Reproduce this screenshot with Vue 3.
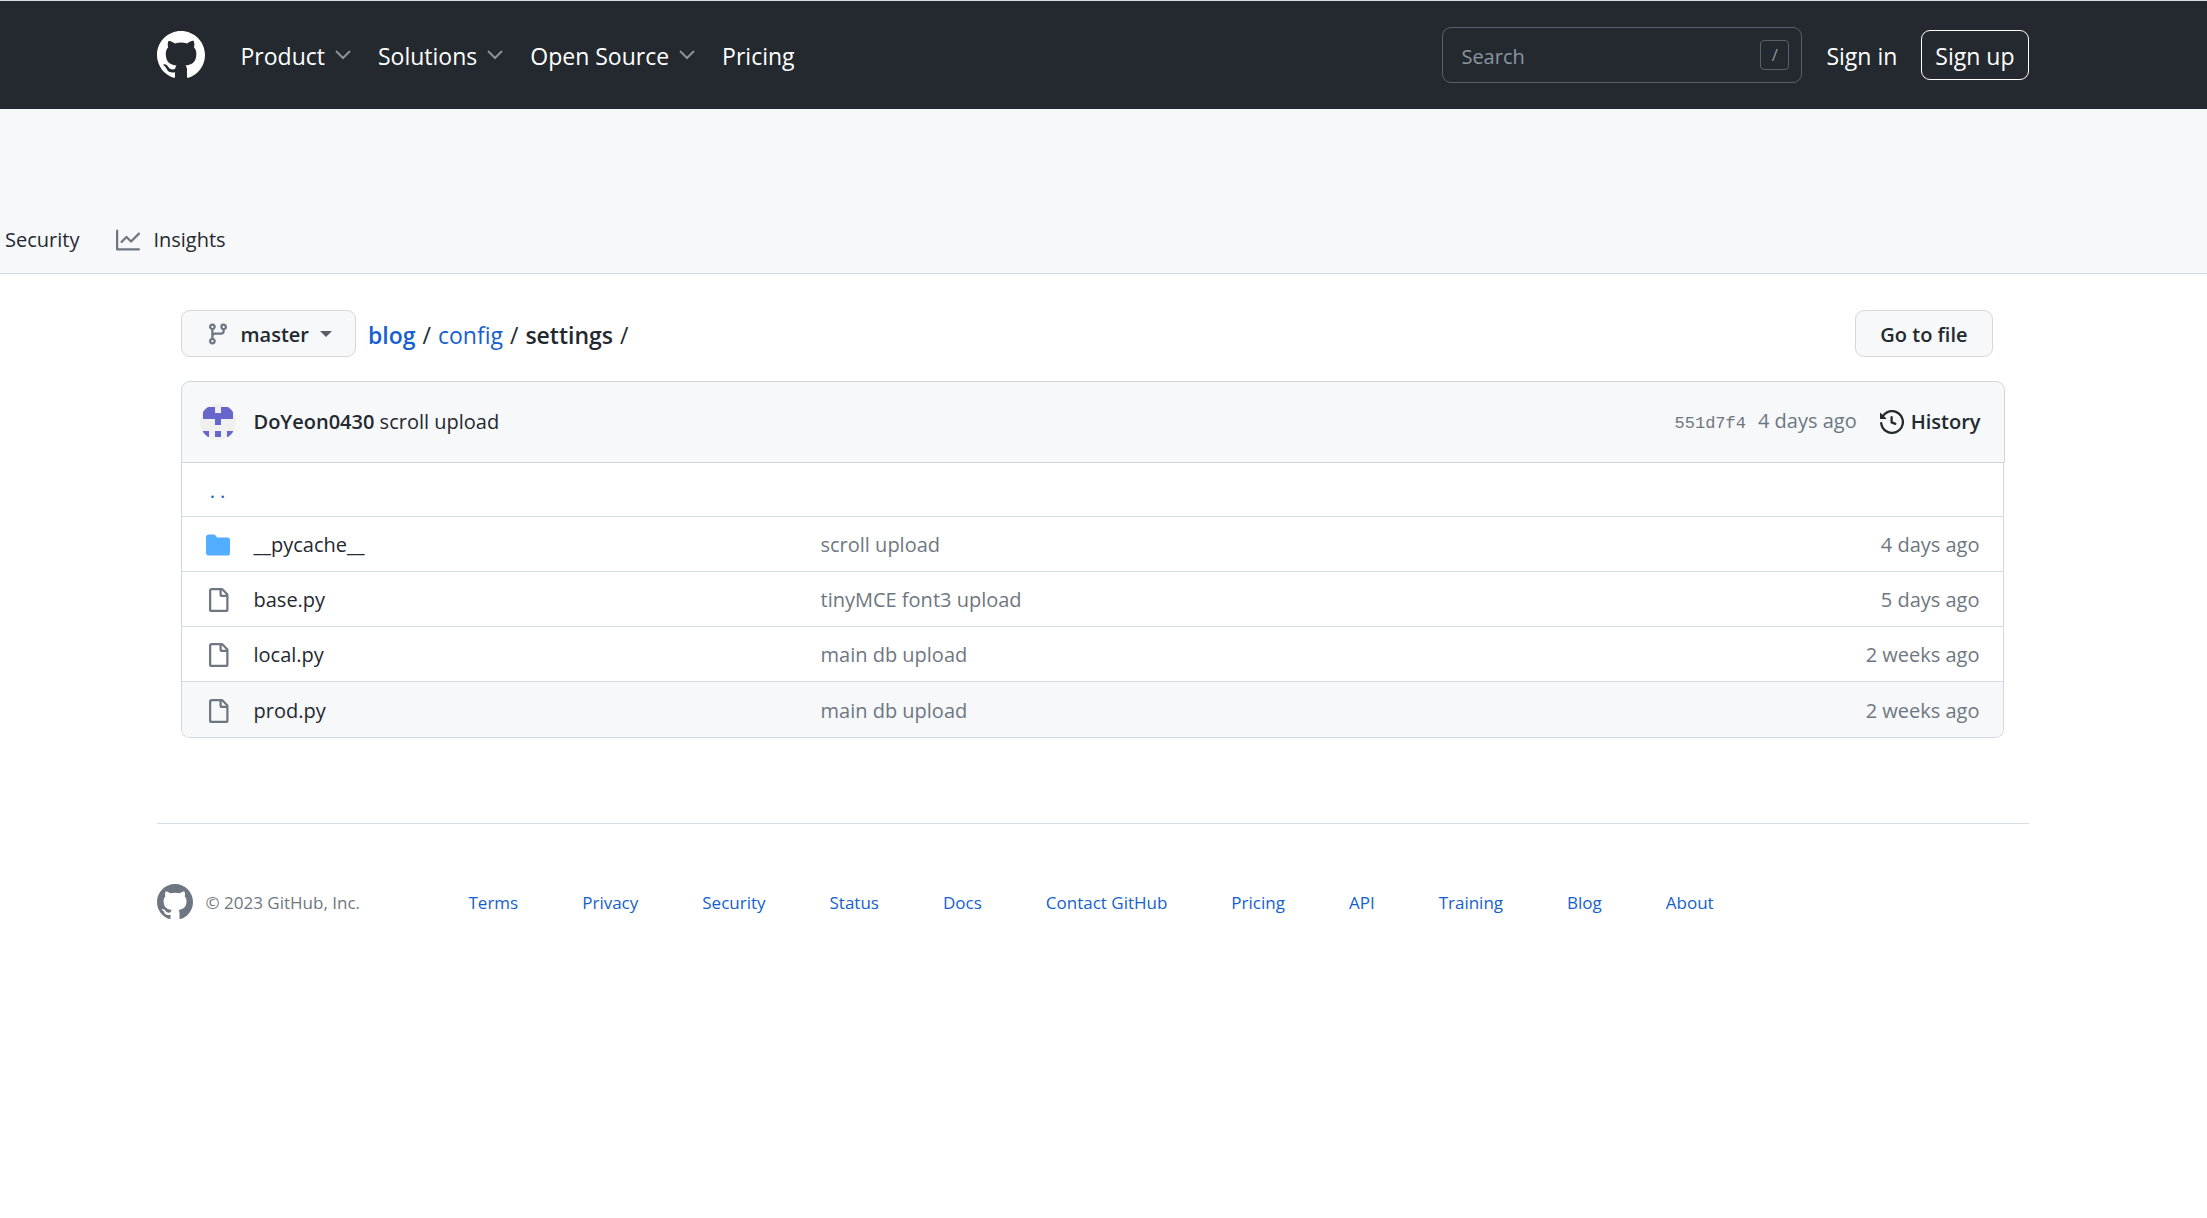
<script setup>
const menus = [
  { label: 'Product', open: true },
  { label: 'Solutions', open: true },
  { label: 'Open Source', open: true },
  { label: 'Pricing', open: false },
]
const files = [
  { name: '__pycache__', dir: true, message: 'scroll upload', age: '4 days ago' },
  { name: 'base.py', message: 'tinyMCE font3 upload', age: '5 days ago' },
  { name: 'local.py', message: 'main db upload', age: '2 weeks ago' },
  { name: 'prod.py', message: 'main db upload', age: '2 weeks ago', active: true },
]
const footerLinks = ['Terms', 'Privacy', 'Security', 'Status', 'Docs', 'Contact GitHub', 'Pricing', 'API', 'Training', 'Blog', 'About']
const mark = 'M8 0C3.58 0 0 3.58 0 8c0 3.54 2.29 6.53 5.47 7.59.4.07.55-.17.55-.38 0-.19-.01-.82-.01-1.49-2.01.37-2.53-.49-2.69-.94-.09-.23-.48-.94-.82-1.13-.28-.15-.68-.52-.01-.53.63-.01 1.08.58 1.23.82.72 1.21 1.87.87 2.33.66.07-.52.28-.87.51-1.07-1.78-.2-3.64-.89-3.64-3.95 0-.87.31-1.59.82-2.15-.08-.2-.36-1.02.08-2.12 0 0 .67-.21 2.2.82.64-.18 1.32-.27 2-.27.68 0 1.36.09 2 .27 1.53-1.04 2.2-.82 2.2-.82.44 1.1.16 1.92.08 2.12.51.56.82 1.27.82 2.15 0 3.07-1.87 3.75-3.65 3.95.29.25.54.73.54 1.48 0 1.07-.01 1.93-.01 2.2 0 .21.15.46.55.38A8.013 8.013 0 0 0 16 8c0-4.42-3.58-8-8-8z'
</script>

<template>
  <div class="page">
    <header class="site-header">
      <div class="container header-row">
        <a href="#" class="logo" aria-label="Homepage">
          <svg width="48" height="48" viewBox="0 0 16 16"><path :d="mark" /></svg>
        </a>
        <nav class="menu" aria-label="Global">
          <template v-for="m in menus" :key="m.label">
            <button v-if="m.open" type="button" class="menu-item">
              <span class="label">{{ m.label }}</span>
              <svg class="chevron" width="16" height="10" viewBox="0 0 16 10"><path d="M1 1l7 7 7-7" /></svg>
            </button>
            <a v-else href="#" class="menu-item"><span class="label">{{ m.label }}</span></a>
          </template>
        </nav>
        <label class="search">
          <input type="text" placeholder="Search" aria-label="Search" />
          <kbd>/</kbd>
        </label>
        <a href="#" class="sign-in label">Sign in</a>
        <a href="#" class="sign-up"><span class="label">Sign up</span></a>
      </div>
    </header>

    <nav class="repo-nav" aria-label="Repository">
      <a href="#" class="tab">Security</a>
      <a href="#" class="tab">
        <svg width="24" height="24" viewBox="0 0 16 16"><path d="M1.5 1.75V13.5h13.75a.75.75 0 0 1 0 1.5H.75a.75.75 0 0 1-.75-.75V1.75a.75.75 0 0 1 1.5 0Zm14.28 2.53-5.25 5.25a.75.75 0 0 1-1.06 0L7 7.06 4.28 9.78a.751.751 0 0 1-1.042-.018.751.751 0 0 1-.018-1.042l3.25-3.25a.75.75 0 0 1 1.06 0L10 7.94l4.72-4.72a.751.751 0 0 1 1.042.018.751.751 0 0 1 .018 1.042Z" /></svg>
        Insights
      </a>
    </nav>

    <div class="container">
      <main class="content">
        <div class="toolbar">
          <button type="button" class="btn branch">
            <svg width="24" height="24" viewBox="0 0 16 16"><path d="M9.5 3.25a2.25 2.25 0 1 1 3 2.122V6A2.5 2.5 0 0 1 10 8.5H6a1 1 0 0 0-1 1v1.128a2.251 2.251 0 1 1-1.5 0V5.372a2.25 2.25 0 1 1 1.5 0v1.836A2.493 2.493 0 0 1 6 7h4a1 1 0 0 0 1-1v-.628A2.25 2.25 0 0 1 9.5 3.25Zm-6 0a.75.75 0 1 0 1.5 0 .75.75 0 0 0-1.5 0Zm8.25-.75a.75.75 0 1 0 0 1.5.75.75 0 0 0 0-1.5ZM4.25 12a.75.75 0 1 0 0 1.5.75.75 0 0 0 0-1.5Z" /></svg>
            <span class="label">master</span>
            <span class="caret"></span>
          </button>
          <div class="crumbs label">
            <a href="#" class="root">blog</a><span>/</span><a href="#">config</a><span>/</span><strong>settings</strong><span>/</span>
          </div>
          <button type="button" class="btn goto"><span class="label">Go to file</span></button>
        </div>

        <section class="listing">
          <div class="commit">
            <svg class="avatar" width="36" height="36" viewBox="0 0 36 36">
              <defs><clipPath id="round"><circle cx="18" cy="18" r="18" /></clipPath></defs>
              <g clip-path="url(#round)">
                <rect width="36" height="36" fill="#f0f0f0" />
                <path fill="#6666cc" shape-rendering="crispEdges" d="M3 3h12v6h6v-6h12v12h-12v6h-6v-6h-12zM3 27h6v6h-6zM15 27h6v6h-6zM27 27h6v6h-6z" />
              </g>
            </svg>
            <p class="summary"><a href="#" class="author">DoYeon0430</a> <a href="#">scroll upload</a></p>
            <div class="meta">
              <a href="#" class="hash">551d7f4</a>
              <span>4 days ago</span>
            </div>
            <a href="#" class="history">
              <svg width="24" height="24" viewBox="0 0 16 16"><path d="m.427 1.927 1.215 1.215a8.002 8.002 0 1 1-1.6 5.685.75.75 0 1 1 1.493-.154 6.5 6.5 0 1 0 1.18-4.458l1.358 1.358A.25.25 0 0 1 3.896 6H.25A.25.25 0 0 1 0 5.75V2.104a.25.25 0 0 1 .427-.177ZM7.75 4a.75.75 0 0 1 .75.75v2.992l2.028.812a.75.75 0 0 1-.557 1.392l-2.5-1A.751.751 0 0 1 7 8.25v-3.5A.75.75 0 0 1 7.75 4Z" /></svg>
              History
            </a>
          </div>
          <div class="files">
            <table>
              <tbody>
                <tr class="up">
                  <td class="icon"><a href="#" aria-label="Parent directory">. .</a></td>
                  <td class="name"></td>
                  <td></td>
                  <td class="age"></td>
                </tr>
                <tr v-for="f in files" :key="f.name" :class="{ active: f.active }">
                  <td class="icon">
                    <svg v-if="f.dir" class="folder" width="24" height="24" viewBox="0 0 16 16"><path d="M1.75 1A1.75 1.75 0 0 0 0 2.75v10.5C0 14.216.784 15 1.75 15h12.5A1.75 1.75 0 0 0 16 13.25v-8.5A1.75 1.75 0 0 0 14.25 3H7.5a.25.25 0 0 1-.2-.1l-.9-1.2C6.07 1.26 5.55 1 5 1H1.75Z" /></svg>
                    <svg v-else width="24" height="24" viewBox="0 0 16 16"><path d="M2 1.75C2 .784 2.784 0 3.75 0h6.586c.464 0 .909.184 1.237.513l2.914 2.914c.329.328.513.773.513 1.237v9.586A1.75 1.75 0 0 1 13.25 16h-9.5A1.75 1.75 0 0 1 2 14.25Zm1.75-.25a.25.25 0 0 0-.25.25v12.5c0 .138.112.25.25.25h9.5a.25.25 0 0 0 .25-.25V6h-2.75A1.75 1.75 0 0 1 9 4.25V1.5Zm6.75.062V4.25c0 .138.112.25.25.25h2.688l-.011-.013-2.914-2.914-.013-.011Z" /></svg>
                  </td>
                  <td class="name"><a href="#">{{ f.name }}</a></td>
                  <td class="message"><a href="#">{{ f.message }}</a></td>
                  <td class="age">{{ f.age }}</td>
                </tr>
              </tbody>
            </table>
          </div>
        </section>
      </main>

      <footer class="footer">
        <div class="copyright">
          <svg width="36" height="36" viewBox="0 0 16 16"><path :d="mark" /></svg>
          <span class="label">© 2023 GitHub, Inc.</span>
        </div>
        <ul class="label">
          <li v-for="l in footerLinks" :key="l"><a href="#">{{ l }}</a></li>
        </ul>
      </footer>
    </div>
  </div>
</template>

<style>
body {
  margin: 0;
  background: #fff;
}
</style>

<style scoped>
.page {
  font-family: "Open Sans", "Noto Sans", sans-serif;
  font-size: 20px;
  line-height: 32px;
  color: #24292f;
}
.page * {
  box-sizing: border-box;
}
a {
  color: inherit;
  text-decoration: none;
}
button {
  font: inherit;
  color: inherit;
  background: none;
  border: 0;
  padding: 0;
  cursor: pointer;
}
svg {
  display: block;
  flex: none;
  fill: currentColor;
}
/* Text beside icons and inside boxes is set slightly below centre. */
.label {
  padding-top: 2px;
}
.container {
  max-width: 1920px;
  margin: 0 auto;
  padding: 0 24px;
}
.site-header {
  padding: 0 22px 0 0;
  background: #24292f;
  border-top: 1px solid #d8dee4;
  color: #fff;
  font-size: 23px;
}
.page > .container {
  max-width: 1942px;
  padding-right: 46px;
}
.header-row {
  display: flex;
  align-items: center;
  height: 108px;
}
.menu {
  display: flex;
  flex: 1;
  gap: 27px;
  margin-left: 36px;
}
.menu-item {
  display: flex;
  align-items: center;
  gap: 10px;
  white-space: nowrap;
}
.menu-item .label,
.sign-up .label {
  display: block;
}
.chevron {
  fill: none;
  stroke: #8c9198;
  stroke-width: 2;
}
.search {
  display: flex;
  align-items: center;
  width: 360px;
  height: 56px;
  padding: 0 12px 0 18px;
  border: 1px solid #57606a;
  border-radius: 9px;
}
.search input {
  flex: 1;
  min-width: 0;
  padding: 3px 0 0;
  border: 0;
  outline: 0;
  background: none;
  color: #fff;
  font: inherit;
  font-size: 20px;
}
.search input::placeholder {
  color: #8c959f;
  opacity: 1;
}
kbd {
  width: 29px;
  height: 30px;
  border: 1px solid #57606a;
  border-radius: 4px;
  color: #8c959f;
  font: inherit;
  font-size: 17px;
  line-height: 28px;
  text-align: center;
}
.sign-in {
  margin: 0 24px;
}
.sign-up {
  padding: 7px 13px;
  border: 1px solid #fff;
  border-radius: 9px;
}
.repo-nav {
  display: flex;
  align-items: flex-end;
  gap: 37px;
  height: 165px;
  padding: 0 5px 17px;
  background: #f6f8fa;
  border-bottom: 1px solid #d0d7de;
}
.tab {
  display: flex;
  align-items: center;
  gap: 13px;
}
.tab svg,
.branch svg,
.icon svg {
  color: #6e7781;
}
.content {
  padding: 36px 24px 0;
}
.toolbar {
  display: flex;
  align-items: center;
  gap: 12px;
  padding-right: 12px;
  margin-bottom: 24px;
}
.btn {
  display: flex;
  align-items: center;
  height: 47px;
  padding: 0 24px;
  border: 1px solid #d5d8da;
  border-radius: 9px;
  background: #f6f8fa;
  font-weight: 600;
}
.branch {
  gap: 11px;
  padding-right: 23px;
}
.caret {
  border: 6px solid transparent;
  border-top-color: #57606a;
  border-bottom: 0;
}
.crumbs {
  display: flex;
  flex: 1;
  gap: 7px;
  font-size: 23px;
}
.crumbs a,
.up a {
  color: #1560cf;
}
.root,
.crumbs strong,
.author,
.history {
  font-weight: 600;
}
.commit {
  display: flex;
  align-items: center;
  height: 82px;
  padding: 0 23px 0 18px;
  border: 1px solid #d0d7de;
  border-radius: 9px 9px 0 0;
  background: #f6f8fa;
}
.summary {
  flex: 1;
  margin: 0 0 0 18px;
}
.meta {
  display: flex;
  align-items: baseline;
  gap: 12px;
}
.hash {
  font-family: "Liberation Mono", monospace;
  font-size: 17px;
}
.meta,
.message,
.age {
  color: #6e7781;
}
.history {
  display: flex;
  align-items: center;
  gap: 7px;
  margin-left: 23px;
}
.files {
  margin-right: 1px;
  border: 1px solid #d0d7de;
  border-top: 0;
  border-radius: 0 0 9px 9px;
  overflow: hidden;
}
table {
  width: 100%;
  border-spacing: 0;
  table-layout: fixed;
}
td {
  height: 55px;
  padding: 2px 0 0;
  border-top: 1px solid #d8dee4;
}
.up td {
  height: 53px;
  border-top: 0;
}
tr:last-child td {
  height: 56px;
}
.active {
  background: #f6f8fa;
}
.icon {
  width: 72px;
  padding-left: 24px;
}
.up a {
  display: block;
  width: 24px;
  text-align: center;
}
.name {
  width: 567px;
}
.age {
  width: 200px;
  padding-right: 23px;
  text-align: right;
}
.icon .folder {
  color: #54aeff;
}
.footer {
  display: flex;
  align-items: center;
  margin-top: 85px;
  padding: 60px 0;
  border-top: 1px solid #d8dee4;
  font-size: 17px;
}
.copyright {
  display: flex;
  align-items: center;
  gap: 13px;
  width: 312px;
  color: #6e7781;
}
ul {
  display: flex;
  flex-wrap: wrap;
  gap: 64px;
  margin: 0;
  padding: 0;
  list-style: none;
}
li a {
  color: #1560cf;
}
</style>
